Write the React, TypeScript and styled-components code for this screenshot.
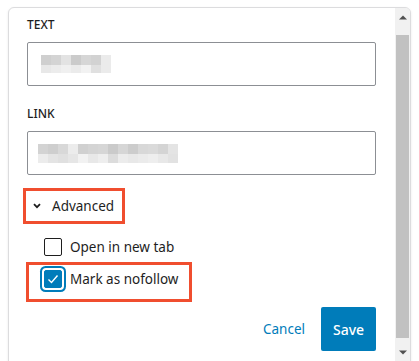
import styled, { createGlobalStyle } from 'styled-components'

const GlobalStyle = createGlobalStyle`
	html, body {
		margin: 0;
		padding: 0;
		background: #ffffff;
		overflow: hidden;
	}
	body {
		font-family: 'Noto Sans', 'Liberation Sans', sans-serif;
		color: #1e1e1e;
	}
`

const Page = styled.div`
	padding: 7px 0 0 8px;
	width: 419px;
	height: 361px;
	box-sizing: border-box;
	overflow: hidden;
`

const Panel = styled.div`
	display: flex;
	width: 403px;
	height: 360px;
	box-sizing: border-box;
	border: 1px solid #dcdcde;
	border-radius: 6px 6px 0 0;
	box-shadow: 0 1px 3px rgba(0, 0, 0, 0.08);
	background: #ffffff;
	overflow: hidden;
`

const Content = styled.div`
	flex: 1;
	padding: 9px 19px 0 18px;
	display: flex;
	flex-direction: column;
`

const Field = styled.div<{ $gap?: number }>`
	display: flex;
	flex-direction: column;
	margin-top: ${p => p.$gap ?? 0}px;
`

const Label = styled.div`
	font-size: 12px;
	font-weight: 500;
	line-height: 16px;
	text-transform: uppercase;
	margin-bottom: 9px;
	color: #1e1e1e;
`

const InputBox = styled.div<{ $pad: number }>`
	height: 44px;
	box-sizing: border-box;
	border: 1px solid #8c8f94;
	border-radius: 2px;
	display: flex;
	align-items: center;
	padding-left: ${p => p.$pad}px;
`

const AdvancedToggle = styled.button`
	align-self: flex-start;
	margin: 16px 0 0 -1px;
	height: 30px;
	padding: 0 8px 0 7px;
	display: inline-flex;
	align-items: center;
	gap: 11px;
	border: none;
	background: transparent;
	font-family: inherit;
	font-size: 13.5px;
	color: #1e1e1e;
	outline: 3px solid #f04e2f;
	cursor: pointer;
`

const CheckRow = styled.label<{ $highlight?: boolean }>`
	display: flex;
	align-items: center;
	gap: 8px;
	height: 24px;
	font-size: 13.5px;
	color: #1e1e1e;
	margin: ${p => (p.$highlight ? '6px 0 0 2px' : '14px 0 0 17px')};
	padding: ${p => (p.$highlight ? '2px 0 8px 15px' : '0')};
	width: ${p => (p.$highlight ? '145px' : 'auto')};
	outline: ${p => (p.$highlight ? '3px solid #f04e2f' : 'none')};
`

const Box = styled.span<{ $checked?: boolean }>`
	width: 18px;
	height: 18px;
	box-sizing: border-box;
	border-radius: 2px;
	border: 1px solid ${p => (p.$checked ? '#007cba' : '#1e1e1e')};
	background: ${p => (p.$checked ? '#007cba' : '#ffffff')};
	display: flex;
	align-items: center;
	justify-content: center;
	box-shadow: ${p =>
		p.$checked ? '0 0 0 2px #ffffff, 0 0 0 4px #007cba' : 'none'};
	flex-shrink: 0;
`

const Actions = styled.div`
	display: flex;
	justify-content: flex-end;
	align-items: center;
	margin-top: 8px;
`

const CancelButton = styled.button`
	height: 44px;
	padding: 0 12px;
	margin-right: 4px;
	border: none;
	background: transparent;
	font-family: inherit;
	font-size: 13.5px;
	color: #007cba;
`

const SaveButton = styled.button`
	height: 44px;
	width: 55px;
	border: none;
	border-radius: 2px;
	background: #007cba;
	color: #ffffff;
	font-family: inherit;
	font-size: 14px;
	font-weight: 500;
`

const Scrollbar = styled.div`
	width: 15px;
	background: #f1f1f1;
	display: flex;
	flex-direction: column;
	align-items: center;
`

const ArrowCell = styled.div<{ $top: number }>`
	height: 17px;
	margin-top: ${p => p.$top}px;
	display: flex;
	align-items: center;
	justify-content: center;
	width: 100%;
`

const Thumb = styled.div`
	width: 13px;
	height: 303px;
	margin-top: 9px;
	background: #c1c1c1;
`

type Mosaic = { cols: string[][]; size: number }

const textMosaic: Mosaic = {
	size: 10,
	cols: [
		['#cfcfcf', '#d4d4d4', '#e3e3e3', '#cbcbcb', '#d6d6d6', '#d2d2d2', '#ebebeb'],
		['#e8e8e8', '#ececec', '#f0f0f0', '#ebebeb', '#f2f2f2', '#e0e0e0', '#ebebeb'],
	],
}

const linkMosaic: Mosaic = {
	size: 10,
	cols: [
		['#d3d3d3', '#cecece', '#d8d8d8', '#ececec', '#d0d0d0', '#d4d4d4', '#d6d6d6', '#cacaca', '#d6d6d6', '#cccccc', '#d8d8d8', '#dadada', '#d4d4d4', '#e4e4e4', '#ffffff'],
		['#ececec', '#e4e4e4', '#e0e0e0', '#e6e6e6', '#f2f2f2', '#e8e8e8', '#eeeeee', '#dcdcdc', '#ececec', '#e8e8e8', '#ebebeb', '#eeeeee', '#e8e8e8', '#e2e2e2', '#ffffff'],
	],
}

// blurred-out field values, drawn as a pixel mosaic
const Redacted = ({ data, height }: { data: Mosaic; height: number[] }) => {
	const w = data.cols[0].length * data.size
	return (
		<svg width={w} height={height[0] + height[1]} style={{ display: 'block' }}>
			{data.cols.map((row, r) =>
				row.map((c, i) => (
					<rect
						key={r + '-' + i}
						x={i * data.size}
						y={r === 0 ? 0 : height[0]}
						width={data.size}
						height={height[r]}
						fill={c}
					/>
				))
			)}
		</svg>
	)
}

const Chevron = () => (
	<svg width="8" height="6" viewBox="0 0 8 6">
		<path d="M1 1.2 L4 4.2 L7 1.2" fill="none" stroke="#1e1e1e" strokeWidth="1.8" />
	</svg>
)

const Check = () => (
	<svg width="14" height="14" viewBox="0 0 14 14">
		<path d="M2.5 7.5 L5.5 10.5 L11.5 3.5" fill="none" stroke="#ffffff" strokeWidth="1.4" />
	</svg>
)

const Triangle = ({ up }: { up?: boolean }) => (
	<svg width="8" height="5" viewBox="0 0 8 5">
		<path d={up ? 'M0 4.5 L4 0.5 L8 4.5 Z' : 'M0 0.5 L4 4.5 L8 0.5 Z'} fill="#505050" />
	</svg>
)

export default function App() {
	return (
		<>
			<GlobalStyle />
			<Page>
				<Panel>
					<Content>
						<Field>
							<Label>Text</Label>
							<InputBox $pad={13}>
								<Redacted data={textMosaic} height={[10, 8]} />
							</InputBox>
						</Field>
						<Field $gap={20}>
							<Label>Link</Label>
							<InputBox $pad={10}>
								<Redacted data={linkMosaic} height={[10, 9]} />
							</InputBox>
						</Field>

						<AdvancedToggle>
							<Chevron />
							<span>Advanced</span>
						</AdvancedToggle>

						<CheckRow>
							<Box />
							<span>Open in new tab</span>
						</CheckRow>
						<CheckRow $highlight>
							<Box $checked>
								<Check />
							</Box>
							<span>Mark as nofollow</span>
						</CheckRow>

						<Actions>
							<CancelButton>Cancel</CancelButton>
							<SaveButton>Save</SaveButton>
						</Actions>
					</Content>
					<Scrollbar>
						<ArrowCell $top={1}>
							<Triangle up />
						</ArrowCell>
						<Thumb />
						<ArrowCell $top={6}>
							<Triangle />
						</ArrowCell>
					</Scrollbar>
				</Panel>
			</Page>
		</>
	)
}
